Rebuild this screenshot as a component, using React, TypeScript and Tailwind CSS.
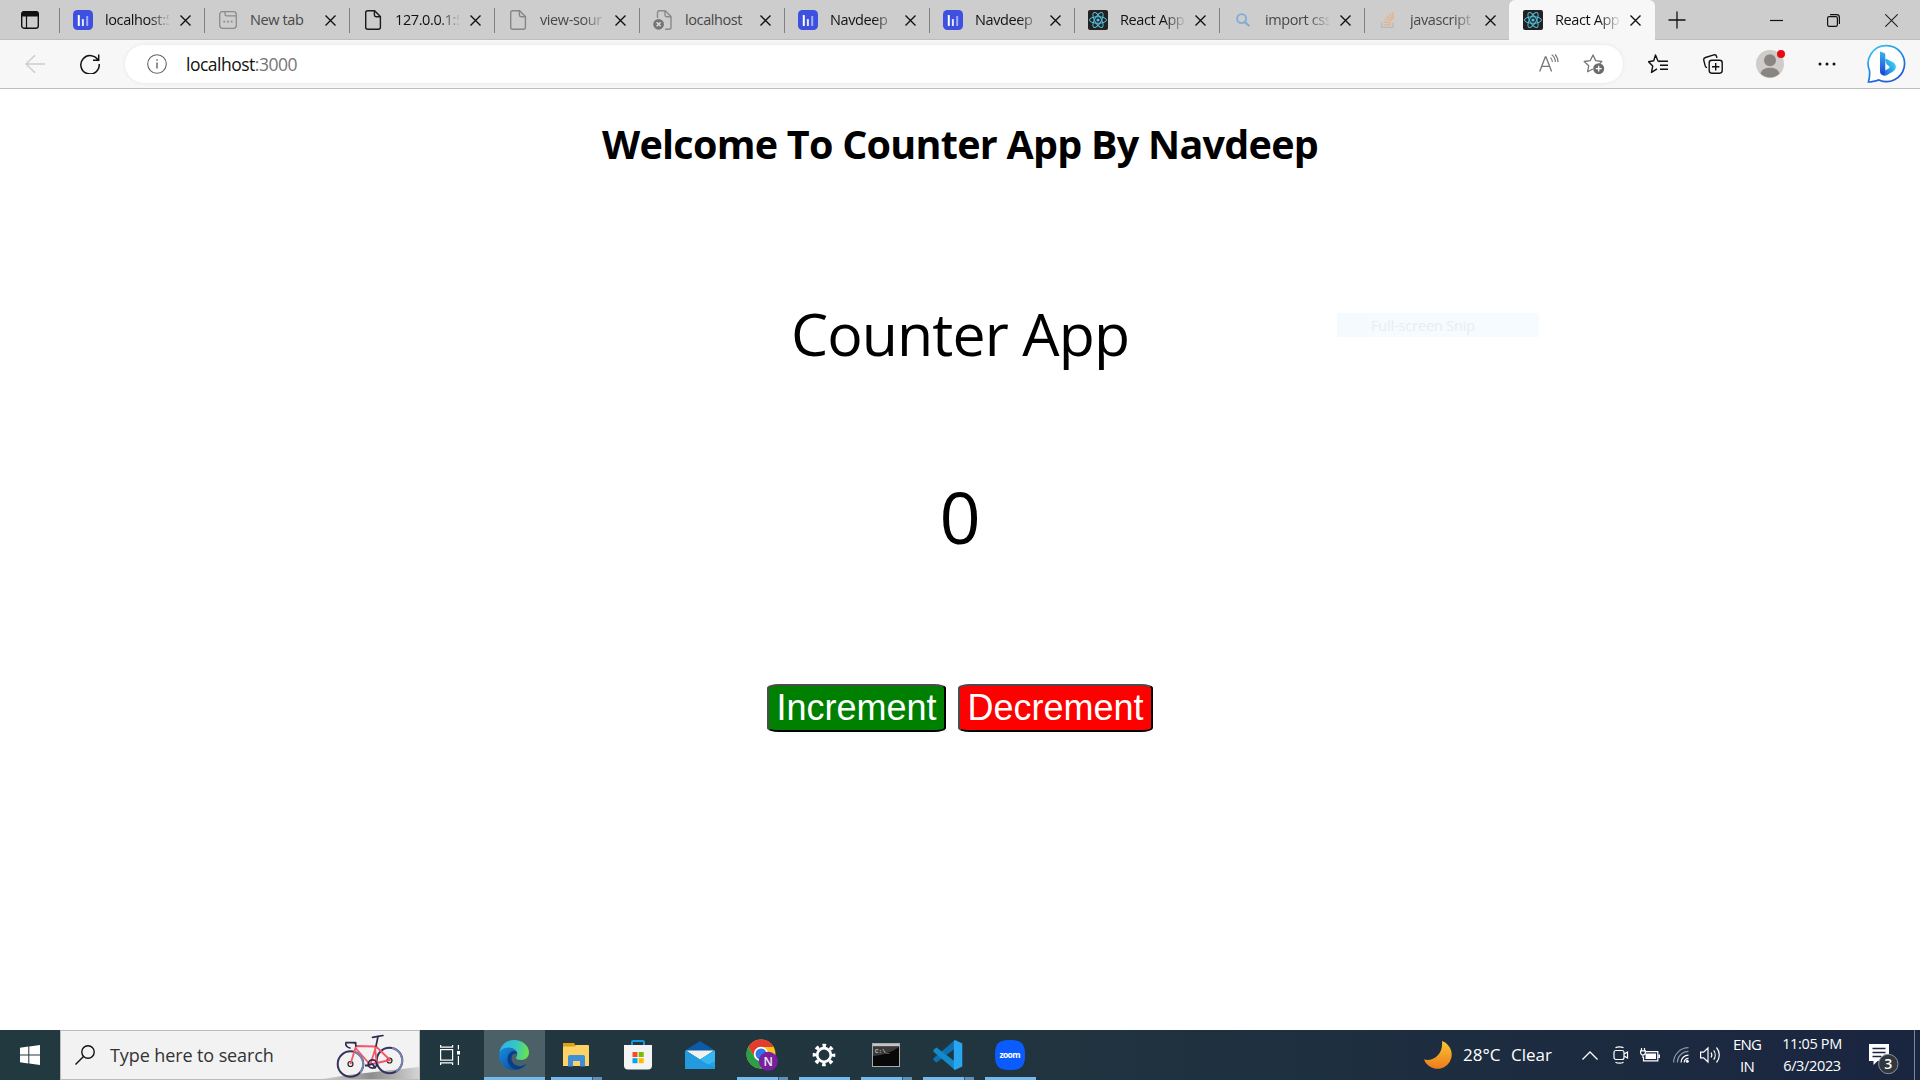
import { useState } from "react";
import type { ReactNode } from "react";

function WsIcon() {
  return (
    <svg width="20" height="20" viewBox="0 0 20 20">
      <rect width="20" height="20" rx="4.5" fill="#3d50e0" />
      <rect x="4.8" y="5" width="2" height="11" rx=".4" fill="#fff" />
      <rect x="8.900" y="9" width="2" height="7" rx=".4" fill="#e6e9ff" />
      <rect x="13.200" y="6" width="2" height="10" rx=".4" fill="#a3adf5" />
    </svg>
  );
}

function NewTabIcon() {
  return (
    <svg width="20" height="20" viewBox="0 0 20 20" fill="none" stroke="#8c8c8c" strokeWidth="1.3">
      <rect x="1.7" y="1.7" width="16.6" height="16.6" rx="2.8" />
      <path d="M7 2v2.2c0 .9.6 1.6 1.6 1.6h9.6" />
      <path d="M5.4 11.7h1.8M9.1 11.7h1.8M12.8 11.7h1.8" strokeWidth="1.8" />
    </svg>
  );
}

function PageIcon({ color }: { color: string }) {
  return (
    <svg width="20" height="20" viewBox="0 0 20 20" fill="none" stroke={color} strokeWidth="1.4">
      <path d="M11.6.8H4.8C3.6.8 2.7 1.700 2.700 2.800v14.400c0 1.100.9 2 2.100 2h10.500c1.200 0 2.100-.9 2.100-2V6.600z" />
      <path d="M11.400 1v4c0 1 .7 1.700 1.700 1.700h4" />
    </svg>
  );
}

function BrokenPageIcon() {
  return (
    <svg width="20" height="20" viewBox="0 0 20 20" fill="none" stroke="#8a8a8a" strokeWidth="1.400">
      <path d="M4.500 8V2.800c0-1.100.8-2 1.900-2h5.800L18 6.600v10.600c0 1.100-.9 2-2 2h-4" />
      <path d="M12 1v4c0 1 .7 1.700 1.700 1.700h4" />
      <circle cx="5.600" cy="14.300" r="5.400" fill="#757575" stroke="none" />
      <path d="M3.600 12.300l4 4M7.600 12.300l-4 4" stroke="#ddd" />
    </svg>
  );
}

function ReactIcon() {
  return (
    <svg width="20" height="20" viewBox="0 0 20 20" fill="none" stroke="#53c1de" strokeWidth="1">
      <rect width="20" height="20" rx="2" fill="#222" stroke="none" />
      <ellipse cx="10" cy="10" rx="8.500" ry="3.300" />
      <ellipse cx="10" cy="10" rx="8.500" ry="3.300" transform="rotate(60 10 10)" />
      <ellipse cx="10" cy="10" rx="8.500" ry="3.300" transform="rotate(120 10 10)" />
      <circle cx="10" cy="10" r="1.600" fill="#53c1de" stroke="none" />
    </svg>
  );
}

function FindIcon() {
  return (
    <svg width="20" height="20" viewBox="0 0 20 20" fill="none" stroke="#82acd6" strokeWidth="1.900">
      <circle cx="8.600" cy="8.600" r="4.500" />
      <path d="M12 12l4.300 4.300" strokeWidth="2.300" />
    </svg>
  );
}

function StackIcon() {
  return (
    <svg width="20" height="20" viewBox="0 0 20 20" fill="none" stroke="#e3b590" strokeWidth="1.500">
      <path d="M3.500 12.500v4.900h11.600v-4.900" stroke="#b9b9b9" strokeWidth="1.300" />
      <path d="M5.500 14.800h7.300M5.700 11.900l7.200.8M6.600 8.900l6.800 2M8.400 5.800l5.800 3.800M11.200 3.600l4 5.300M14.400 2.300l1.400 5.800" />
    </svg>
  );
}

type Tab = { icon: ReactNode; title: string; asleep?: boolean; fade?: boolean };

const tabs: Tab[] = [
  { icon: <WsIcon />, title: "localhost:5", fade: true },
  { icon: <NewTabIcon />, title: "New tab", asleep: true },
  { icon: <PageIcon color="#1b1b1b" />, title: "127.0.0.1:5", fade: true },
  { icon: <PageIcon color="#868686" />, title: "view-sour", asleep: true, fade: true },
  { icon: <BrokenPageIcon />, title: "localhost", asleep: true },
  { icon: <WsIcon />, title: "Navdeep", fade: true },
  { icon: <WsIcon />, title: "Navdeep", fade: true },
  { icon: <ReactIcon />, title: "React App", fade: true },
  { icon: <FindIcon />, title: "import css", asleep: true, fade: true },
  { icon: <StackIcon />, title: "javascript", asleep: true, fade: true },
];

function TabBody({ icon, title, asleep, fade }: Tab) {
  return (
    <>
      {icon}
      <span
        className={`ml-3 w-[64px] overflow-hidden whitespace-nowrap text-[14.5px] leading-[30px] tracking-[-0.4px] ${
          asleep ? "text-[#484848]" : "text-[#111]"
        } ${fade ? "[mask-image:linear-gradient(to_right,black_68%,transparent_104%)]" : ""}`}
      >
        {title}
      </span>
      <svg className="ml-[11px] mt-px" width="11" height="11" viewBox="0 0 11 11" stroke="#111" strokeWidth="1.400">
        <path d="M.5.500l10 10M10.500.500l-10 10" />
      </svg>
    </>
  );
}

function TabStrip() {
  return (
    <div className="flex h-10 bg-[#cdcdcd] shadow-[inset_0_-1px_0_#bdbdbd]">
      <div className="flex w-[59px] items-center pl-[21px]">
        <svg width="18" height="18" viewBox="0 0 18 18" fill="none" stroke="#111" strokeWidth="1.400">
          <rect x=".7" y=".7" width="16.600" height="16.600" rx="2.600" />
          <path d="M1 3.400A2.600 2.600 0 0 1 3.300.7h11.400A2.600 2.600 0 0 1 17 3.400v1.300H1z" fill="#111" />
          <path d="M5.500 5v12.300" strokeWidth="1.200" />
        </svg>
      </div>
      {tabs.map((t, i) => (
        <div key={i} className="flex h-10 w-[145px] items-center">
          <div className="h-[25px] w-px bg-[#808080]" />
          <div className="flex items-center pl-[13px]">
            <TabBody {...t} />
          </div>
        </div>
      ))}
      <div className="relative flex h-10 w-[146px] items-center rounded-t-[6px] bg-[#f7f7f7] pl-[14px]">
        <TabBody icon={<ReactIcon />} title="React App" fade />
      </div>
      <div className="flex flex-1 items-center pl-[13px]">
        <svg width="18" height="18" viewBox="0 0 18 18" stroke="#111" strokeWidth="1.300">
          <path d="M9 .5v17M.5 9h17" />
        </svg>
        <svg className="ml-[84px]" width="13" height="13" viewBox="0 0 13 13" stroke="#111" strokeWidth="1.200">
          <path d="M0 6.500h13" />
        </svg>
        <svg className="ml-[44px]" width="13" height="13" viewBox="0 0 13 13" fill="none" stroke="#111" strokeWidth="1.200">
          <rect x=".6" y="2.600" width="9.800" height="9.800" rx="1.600" />
          <path d="M3 .7h6.600a2.800 2.800 0 0 1 2.800 2.800V10" />
        </svg>
        <svg className="ml-[45px]" width="13" height="13" viewBox="0 0 13 13" stroke="#222" strokeWidth="1.100">
          <path d="M.3.300l12.400 12.400M12.700.300L.3 12.700" />
        </svg>
      </div>
    </div>
  );
}

function BingIcon() {
  return (
    <svg className="ml-[30px]" width="40" height="40" viewBox="0 0 40 40" fill="none">
      <defs>
        <linearGradient id="bingRing" x1="8" y1="2" x2="28" y2="38" gradientUnits="userSpaceOnUse">
          <stop stopColor="#36c5ee" />
          <stop offset=".5" stopColor="#1a86e6" />
          <stop offset="1" stopColor="#2354ce" />
        </linearGradient>
        <linearGradient id="bingTail" x1="14" y1="30" x2="29" y2="20" gradientUnits="userSpaceOnUse">
          <stop stopColor="#1a4fd6" />
          <stop offset="1" stopColor="#35d3f2" />
        </linearGradient>
        <linearGradient id="bingStem" x1="16" y1="8" x2="16" y2="30" gradientUnits="userSpaceOnUse">
          <stop stopColor="#37b0f3" />
          <stop offset="1" stopColor="#1b49d8" />
        </linearGradient>
      </defs>
      <path d="M20.500 1.600a18 18 0 1 1-7.600 34.300c-3 1-7 2.300-10.500 2.100 1-3.500 1.500-7.500 1.100-11.500A18 18 0 0 1 20.500 1.600z" fill="#fff" stroke="url(#bingRing)" strokeWidth="1.700" />
      <path d="M15.500 28.500l7.500-4.300c1-.7.700-1.800-.200-2.300l-1.300-.8c-.4-.2-.7-.6-.9-1l-1.300-3.600c-.300-1 .500-1.800 1.400-1.400l6 2.800c3.200 1.500 4 5 2.300 7.700-.6 1-1.500 1.700-2.400 2.200l-5.400 3.200c-3 1.500-6 .2-6.200-2.500z" fill="url(#bingTail)" />
      <path d="M14 7.500l3.600 1.300c1.200.4 1.700 1 1.700 2.200v15.400c0 2-.8 3.800-2 4.900-2-.2-3.300-1.700-3.300-3.700z" fill="url(#bingStem)" />
    </svg>
  );
}

function Toolbar() {
  return (
    <div className="flex h-[49px] items-center border-b border-[#bdbdbd] bg-[#f7f7f7]">
      <svg className="ml-[25px]" width="20" height="20" viewBox="0 0 20 20" fill="none" stroke="#cdcdcd" strokeWidth="1.400">
        <path d="M20 10H1M10 1.300L1 10l9 8.700" />
      </svg>
      <svg className="ml-[35px]" width="20" height="20" viewBox="0 0 20 20" fill="none" stroke="#111" strokeWidth="1.500">
        <path d="M18.400 7A9.200 9.200 0 1 0 19.200 10M18.700.5v5.700H13" />
      </svg>
      <div className="ml-[25px] flex h-[38px] w-[1498px] items-center rounded-full bg-white pl-[22px] shadow-[0_0_4px_rgba(0,0,0,0.08)]">
        <svg width="20" height="20" viewBox="0 0 20 20" fill="none" stroke="#666" strokeWidth="1.100">
          <circle cx="10" cy="10" r="9.300" />
          <path d="M10 8.500v6M10 5.300v1.500" strokeWidth="1.400" />
        </svg>
        <span className="ml-[19px] text-[17.5px] leading-[30px] tracking-[-0.5px] text-[#111]">
          localhost<span className="text-[#767676]">:3000</span>
        </span>
        <svg className="ml-auto" width="20" height="20" viewBox="0 0 20 20" fill="none" stroke="#767676" strokeWidth="1.300">
          <path d="M.700 17.500L6.300 3h.7l5.600 14.500M2.700 12.400h7.900" />
          <path d="M11.500 3.700c1.300 1.200 1.900 2.600 1.900 4.300M12.700.8c2.300 1.600 3.600 4 3.600 7.200M16 .3c1.900 2 3 4.600 3 7.700" strokeWidth="1.100" />
        </svg>
        <svg className="ml-[24px] mr-[18px]" width="22" height="22" viewBox="0 0 22 22" fill="none" stroke="#767676" strokeWidth="1.300" strokeLinejoin="round">
          <path d="M9.800 17l-5.200 2.800 1.100-6L1.200 9.500l6-.8L10 3l2.700 5.600 6.100.9-2.200 2.200" transform="translate(0 -1)" />
          <circle cx="15.700" cy="15.700" r="5.500" fill="#6b6b6b" stroke="none" />
          <path d="M15.700 12.800v5.800M12.800 15.700h5.800" stroke="#fff" />
        </svg>
      </div>
      <svg className="ml-[25px]" width="20" height="20" viewBox="0 0 20 20" fill="none" stroke="#111" strokeWidth="1.400" strokeLinejoin="round">
        <path d="M12 7.500l-2-.4L7.500 1 5.700 6.800.5 7.800l4.200 4.300-1.200 6.300 5.500-3.600" />
        <path d="M11 7.300h9M12 11.300h8M12 15.300h8" />
      </svg>
      <svg className="ml-[35px]" width="20" height="20" viewBox="0 0 20 20" fill="none" stroke="#111" strokeWidth="1.400">
        <rect x="6.200" y="6.200" width="13" height="13" rx="2.600" />
        <path d="M12.700 9v7.400M9 12.700h7.400" />
        <path d="M4 13.700l-.6-.3c-.6-.3-1-.9-1.200-1.500L.800 6.300c-.3-1.300.4-2.400 1.700-2.800L10.800.900c1.300-.3 2.500.3 2.800 1.600l.3 1.300" />
      </svg>
      <svg className="ml-[33px]" width="30" height="30" viewBox="0 0 30 30">
        <circle cx="14" cy="15" r="14" fill="#cfccca" />
        <circle cx="14" cy="11.200" r="6" fill="#8a8583" />
        <path d="M4.500 24.500c1.300-4.300 5-5.800 9.500-5.800s8.200 1.500 9.500 5.800A13.500 13.500 0 0 1 14 28.500a13.500 13.500 0 0 1-9.500-4z" fill="#8a8583" />
        <circle cx="25" cy="5" r="4" fill="#e50b10" />
      </svg>
      <svg className="ml-[32px]" width="18" height="4" viewBox="0 0 18 4" fill="#111">
        <circle cx="2" cy="2" r="1.500" />
        <circle cx="9" cy="2" r="1.500" />
        <circle cx="16" cy="2" r="1.500" />
      </svg>
      <BingIcon />
    </div>
  );
}

function CounterPage() {
  const [count, setCount] = useState(0);
  const button =
    "flex h-12 items-center justify-center [border-radius:12px_/_4px] border-2 border-b-black border-l-[#4c4c4c] border-r-black border-t-[#4c4c4c] font-['Liberation_Sans',sans-serif] text-[36px] leading-[40px] text-white";
  return (
    <main className="relative flex h-[941px] flex-col items-center text-black">
      <h1 className="mt-[25px] text-[39.5px] font-bold leading-[60px] tracking-[-0.74px]">Welcome To Counter App By Navdeep</h1>
      <div className="mt-[119px] text-[59px] leading-[80px] tracking-[-0.9px]">Counter App</div>
      <div className="mt-[93px] text-[72px] leading-[100px]">{count}</div>
      <div className="mt-[118px] flex gap-3">
        <button className={`${button} w-[179px] bg-[#008000]`} onClick={() => setCount(count + 1)}>
          Increment
        </button>
        <button className={`${button} w-[195px] bg-[#ff0000]`} onClick={() => setCount(count - 1)}>
          Decrement
        </button>
      </div>
      <div className="absolute left-[1337px] top-[224px] flex h-6 w-[202px] items-center border-l-[30px] border-[#f5faff] bg-[#f5fbff] pl-[4px] pt-[2px] text-[14.5px] leading-6 tracking-[-0.15px] text-[#ececee]">
        Full-screen Snip
      </div>
    </main>
  );
}

function Bike() {
  return (
    <svg className="ml-auto" width="97" height="48" viewBox="0 0 97 48" fill="none">
      <defs>
        <linearGradient id="slope" x1="0" y1="46" x2="97" y2="38" gradientUnits="userSpaceOnUse">
          <stop offset="0" stopColor="#d5d5d5" />
          <stop offset=".5" stopColor="#8d8d8d" />
          <stop offset="1" stopColor="#d4d4d4" />
        </linearGradient>
      </defs>
      <path d="M0 48L30 43.500 97 36v12z" fill="url(#slope)" />
      <circle cx="28.500" cy="33" r="12.800" stroke="#34335c" strokeWidth="2" />
      <path d="M33 21.200a12.800 12.800 0 0 1 5 20.300" stroke="#7584b0" strokeWidth="2" />
      <circle cx="67.500" cy="29.500" r="12.800" stroke="#34335c" strokeWidth="2" />
      <path d="M70 17a12.800 12.800 0 0 1 4 23.500" stroke="#7584b0" strokeWidth="2" />
      <circle cx="28.500" cy="33" r="2.500" fill="#eee" stroke="#222" strokeWidth="1.200" />
      <circle cx="67.500" cy="29.500" r="2.500" fill="#eee" stroke="#222" strokeWidth="1.200" />
      <path d="M28.500 33l5.500-18 19 .5L54.500 31M33.500 17L48 33.500l20-4.500L54 15.500 48.500 33" stroke="#f25768" strokeWidth="1.800" strokeLinejoin="round" />
      <path d="M34 15l-.8-3.500H24c-1 3 1.500 5 4 5.500M24 11.500l10 .5M54 15l2-9.500M50.500 6.300l5.500-1 5-.8" stroke="#2f2c4d" strokeWidth="1.700" strokeLinecap="round" />
      <circle cx="50.500" cy="33" r="4.200" stroke="#2f2850" strokeWidth="1.800" />
      <path d="M45 34.500l5.500-1.500 3 4.500M43 34.500h4" stroke="#2f2850" strokeWidth="1.800" />
    </svg>
  );
}

const appIcons: { icon: ReactNode; bar: "none" | "full" | "split" }[] = [
  {
    bar: "split",
    icon: (
      <svg width="28" height="24" viewBox="0 0 28 24">
        <path d="M1 0h11l2 3v4H1z" fill="#e0a010" />
        <path d="M1 3.500h11.500L14 2h12a1 1 0 0 1 1 1v20H1z" fill="#fcd364" />
        <path d="M6 23.500V14a2 2 0 0 1 2-2h13a2 2 0 0 1 2 2v9.500h-5V18h-7v5.500z" fill="#3c8fd8" />
      </svg>
    ),
  },
  {
    bar: "none",
    icon: (
      <svg width="30" height="30" viewBox="0 0 30 30">
        <path d="M9 6.500V2.300C9 1.500 9.500 1 10.300 1h9.400c.8 0 1.300.5 1.300 1.300v4.200" fill="none" stroke="#1698e0" strokeWidth="2" />
        <path d="M1 5h28v20.500a4 4 0 0 1-4 4H5a4 4 0 0 1-4-4z" fill="#f4f4f4" />
        <path fill="#f25022" d="M9.500 12H14.500v5h-5z" />
        <path fill="#7fba00" d="M15.700 12h5v5h-5z" />
        <path fill="#00a4ef" d="M9.500 18.200h5v5h-5z" />
        <path fill="#ffb900" d="M15.700 18.200h5v5h-5z" />
      </svg>
    ),
  },
  {
    bar: "none",
    icon: (
      <svg width="30" height="28" viewBox="0 0 30 28">
        <path d="M0 9.500L15 0l15 9.500L15 19z" fill="#0a5ba8" />
        <path d="M1 9.500h28L15 18.700z" fill="#f1f1f1" />
        <path d="M0 9.500L15 18.500 30 28H0z" fill="#1d93dc" />
        <path d="M30 9.500v18.500L15 18.500z" fill="#26a1e5" />
        <path d="M0 28l15-9.500L30 9.500V20L15 28z" fill="#35b8f1" />
        <path d="M15 18.500L30 28H0V9.500z" fill="#229add" />
      </svg>
    ),
  },
  {
    bar: "split",
    icon: (
      <svg width="32" height="32" viewBox="0 0 32 32">
        <circle cx="15" cy="15" r="14.500" fill="#fbc61b" />
        <path d="M2.300 8A14.500 14.500 0 0 1 27.700 8H15a7 7 0 0 0-6.300 10z" fill="#e33b2e" />
        <path d="M2.300 8A14.500 14.500 0 0 0 14 29.500L21 18.600A7 7 0 0 1 8.900 18.500z" fill="#29a048" />
        <circle cx="15" cy="15" r="7.200" fill="#fff" />
        <circle cx="15" cy="15" r="5.500" fill="#2d77ea" />
        <circle cx="22.300" cy="22.300" r="9.500" fill="#7b1fa2" />
        <text x="22.300" y="26.600" textAnchor="middle" fontFamily="Open Sans, sans-serif" fontSize="12" fontWeight="600" fill="#eee">N</text>
      </svg>
    ),
  },
  {
    bar: "full",
    icon: (
      <svg width="24" height="24" viewBox="0 0 24 24" fill="none" stroke="#fff">
        <circle cx="12" cy="12" r="6.800" strokeWidth="2.700" />
        <circle cx="12" cy="12" r="9.600" strokeWidth="3.400" strokeDasharray="3.600 3.940" strokeDashoffset="1.800" />
      </svg>
    ),
  },
  {
    bar: "split",
    icon: (
      <svg width="28" height="24" viewBox="0 0 28 24">
        <rect x=".5" y=".5" width="27" height="23" fill="#080808" stroke="#aaa" />
        <path d="M1 1h26v2.500H1z" fill="#c4c4c4" />
        <path d="M1 13C12 12 20 9 27 4V3.500H1z" fill="#3a3a3a" />
        <text x="3" y="9.500" fontFamily="Liberation Mono, monospace" fontSize="6" fill="#e5e5e5">C:\_</text>
      </svg>
    ),
  },
  {
    bar: "split",
    icon: (
      <svg width="30" height="30" viewBox="0 0 30 30">
        <path d="M22 0v8.500L3.500 22.600.500 20.300v-2z" fill="#0c70b5" />
        <path d="M22 30v-8.500L3.500 7.400.500 9.700v2z" fill="#158acb" />
        <path d="M22 0l7.300 3.500v23L22 30l-1.200-1V1z" fill="#2aa5ef" />
      </svg>
    ),
  },
  {
    bar: "full",
    icon: (
      <svg width="30" height="30" viewBox="0 0 30 30">
        <path d="M15 0c11.500 0 15 3.500 15 15s-3.500 15-15 15S0 26.500 0 15 3.500 0 15 0z" fill="#0b5cff" />
        <text x="15" y="17.600" textAnchor="middle" fontFamily="Open Sans, sans-serif" fontSize="8.500" fontWeight="700" fill="#fff" textLength="21">zoom</text>
      </svg>
    ),
  },
];

function EdgeIcon() {
  return (
    <svg width="30" height="30" viewBox="0 0 30 30">
      <defs>
        <linearGradient id="edgeTop" x1="2" y1="8" x2="29" y2="14" gradientUnits="userSpaceOnUse">
          <stop stopColor="#2fb4ea" />
          <stop offset=".5" stopColor="#36c7c4" />
          <stop offset="1" stopColor="#6ae24b" />
        </linearGradient>
        <linearGradient id="edgeLow" x1="2" y1="12" x2="18" y2="28" gradientUnits="userSpaceOnUse">
          <stop stopColor="#1683d6" />
          <stop offset="1" stopColor="#0c4fa0" />
        </linearGradient>
      </defs>
      <path d="M.500 12.500C1.500 5 7.500 0 15 0c8.500 0 15 5.500 15 12.500 0 4.500-3.500 7.500-7.500 7.500-3.500 0-5.500-1-5.500-2.300 0-.8 1.200-1.200 1.200-3.500 0-3-3-5.200-7-5.200-5 0-8.700 1.700-10.700 3.500z" fill="url(#edgeTop)" />
      <path d="M0 15C0 10.500 4.500 7.500 9.500 7.500c5.500 0 8.700 3 8.700 6.500-3-1.500-5.700.5-5.700 4.500 0 5 5 8.500 10 7.500 2-.4 3.500-1 5-2.200C25 27.500 20.500 30 15 30 6.500 30 0 23.500 0 15z" fill="url(#edgeLow)" />
      <path d="M8.500 19c0-4.500 3-8 7-8 1.500 0 2.700 1.500 2.700 3-3-1.500-5.700.5-5.700 4.500 0 5 5 8.500 10 7.500 2-.4 3.500-1 5-2.200C25.500 27 22 29 18.500 29.500 12.500 29 8.500 24.500 8.500 19z" fill="#0a3f86" />
    </svg>
  );
}

function Taskbar() {
  return (
    <footer className="flex h-[50px] bg-linear-to-r from-[#22393f] via-[#21353f] to-[#1a2540] text-white">
      <div className="flex w-[60px] items-center justify-center">
        <svg width="20" height="20" viewBox="0 0 20 20" fill="#fff">
          <path d="M0 2.700l8.300-1.200v8H0zM9.300 1.400L20 0v9.500H9.300zM0 10.500h8.300v8L0 17.300zM9.300 10.500H20V20L9.300 18.600z" />
        </svg>
      </div>
      <div className="flex w-[360px] items-center border border-[#bcbcbc] bg-[#f2f2f2] pl-[14px]">
        <svg width="20" height="20" viewBox="0 0 20 20" fill="none" stroke="#111" strokeWidth="1.400">
          <circle cx="13" cy="7" r="6.200" />
          <path d="M8.500 11.500L.500 19.500" />
        </svg>
        <span className="ml-[15px] text-[18px] tracking-[-0.1px] text-[#333]">Type here to search</span>
        <Bike />
      </div>
      <div className="flex w-[64px] items-center pl-5">
        <svg width="20" height="20" viewBox="0 0 20 20" fill="none" stroke="#fff" strokeWidth="1.200">
          <rect x=".6" y="4.600" width="12" height="10.500" />
          <path d="M.600 0v2.200h12V0M.600 20v-2.200h12V20M18.400 0v4.500M18.400 11v9" />
          <path d="M17 6h3v3.500h-3z" fill="#fff" stroke="none" />
        </svg>
      </div>
      <div className="flex w-[61px] flex-col items-center border-b-[3px] border-[#76b9ed] bg-[#4c6068] pr-[2px] pt-[10px]">
        <EdgeIcon />
      </div>
      <div className="flex">
        {appIcons.map(({ icon, bar }, i) => (
          <div key={i} className="flex w-[62px] flex-col items-center">
            <div className="flex h-[47px] items-center pt-[3px]">{icon}</div>
            <div className="flex h-[3px] w-[51px]">
              {bar !== "none" && <div className="flex-1 bg-[#76b9ed]" />}
              {bar === "split" && <div className="w-[10px] border-l border-[#3b5a70] bg-[#5e90b8]" />}
            </div>
          </div>
        ))}
      </div>
      <div className="ml-auto flex items-center">
        <svg width="28" height="28" viewBox="0 0 28 28">
          <defs>
            <linearGradient id="moon" x1="0" y1="0" x2="0" y2="28" gradientUnits="userSpaceOnUse">
              <stop stopColor="#f9c62f" />
              <stop offset="1" stopColor="#ee7a1d" />
            </linearGradient>
          </defs>
          <path d="M18 0a14.300 14.300 0 1 1-18 18.500c9 2.500 19.500-5 18-18.500z" fill="url(#moon)" />
        </svg>
        <span className="ml-[11px] w-[48px] text-[17px]">28°C</span>
        <span className="w-[71px] text-[17px]">Clear</span>
        <svg width="16" height="9" viewBox="0 0 16 9" fill="none" stroke="#fff" strokeWidth="1.300">
          <path d="M.5 8.500L8 1l7.500 7.500" />
        </svg>
        <svg className="ml-[15px]" width="16" height="18" viewBox="0 0 16 18" fill="none" stroke="#fff" strokeWidth="1.200">
          <rect x="1" y="4.500" width="10" height="9" rx="2" />
          <path d="M11 8l3.500-2v6L11 10M2.500 1.800C4.500.500 8.500.500 10.500 1.800M2.500 16.200c2 1.300 6 1.300 8 0" />
        </svg>
        <svg className="ml-[11px]" width="20" height="14" viewBox="0 0 20 14" fill="none" stroke="#fff" strokeWidth="1.200">
          <path d="M5.500 3.600h12.300v9.300H3.500V9" />
          <path d="M5.500 5.500h10.500v5.500H5.500zM18.300 6.500H20V10h-1.700z" fill="#fff" stroke="none" />
          <path d="M1.500 0v2.500M4.500 0v2.500M.600 2.800h4.800v1.800a2.400 2.400 0 0 1-4.800 0zM3 7v3" />
        </svg>
        <svg className="ml-[13px]" width="16" height="16" viewBox="0 0 16 16" fill="none" strokeWidth="1.200">
          <path d="M.600 15.500A15 15 0 0 1 15.500.700M4.300 15.500A11.200 11.200 0 0 1 15.500 4.400" stroke="#8e96a5" />
          <path d="M8 15.500A7.500 7.500 0 0 1 15.500 8.100M11.200 15.500a4.300 4.300 0 0 1 4.300-4.200" stroke="#fff" />
          <circle cx="14.300" cy="14.300" r="1.500" fill="#fff" />
        </svg>
        <svg className="ml-[11px]" width="21" height="18" viewBox="0 0 21 18" fill="none" stroke="#fff" strokeWidth="1.200">
          <path d="M.6 6.200h3L8 2v14l-4.400-4.200h-3zM11 6.500c1 1.500 1 3.500 0 5M13.700 4.300c2 2.700 2 6.700 0 9.400M16.500 1.500c3.700 4.500 3.700 10.500 0 15" />
        </svg>
        <div className="ml-[11px] w-[30px] text-center text-[15px] leading-[22px] tracking-[-0.8px]">
          <div>ENG</div>
          <div>IN</div>
        </div>
        <div className="ml-[18px] w-[64px] whitespace-nowrap text-center text-[14.500px] leading-[22.500px] tracking-[-0.35px]">
          <div>11:05 PM</div>
          <div>6/3/2023</div>
        </div>
        <svg className="ml-[25px] mt-[9px]" width="30" height="31" viewBox="0 0 30 31">
          <path d="M0 0h20v17H8.500L4.500 21v-4H0z" fill="#fff" />
          <path d="M3.500 4.500h13M3.500 8.500h13M3.500 12.500h9" stroke="#1a2540" strokeWidth="1.300" />
          <circle cx="19.300" cy="20" r="9.700" fill="#32373f" stroke="#8b9099" strokeWidth="1" />
          <text x="19.300" y="25" textAnchor="middle" fontFamily="Open Sans, sans-serif" fontSize="14" fontWeight="600" fill="#fff">3</text>
        </svg>
        <div className="ml-[15px] mr-[5px] h-[50px] w-px bg-[#7d8593]" />
      </div>
    </footer>
  );
}

export default function App() {
  return (
    <div className="flex h-[1080px] w-[1920px] flex-col overflow-hidden bg-white font-['Open_Sans','Noto_Sans',sans-serif]">
      <TabStrip />
      <Toolbar />
      <CounterPage />
      <Taskbar />
    </div>
  );
}
